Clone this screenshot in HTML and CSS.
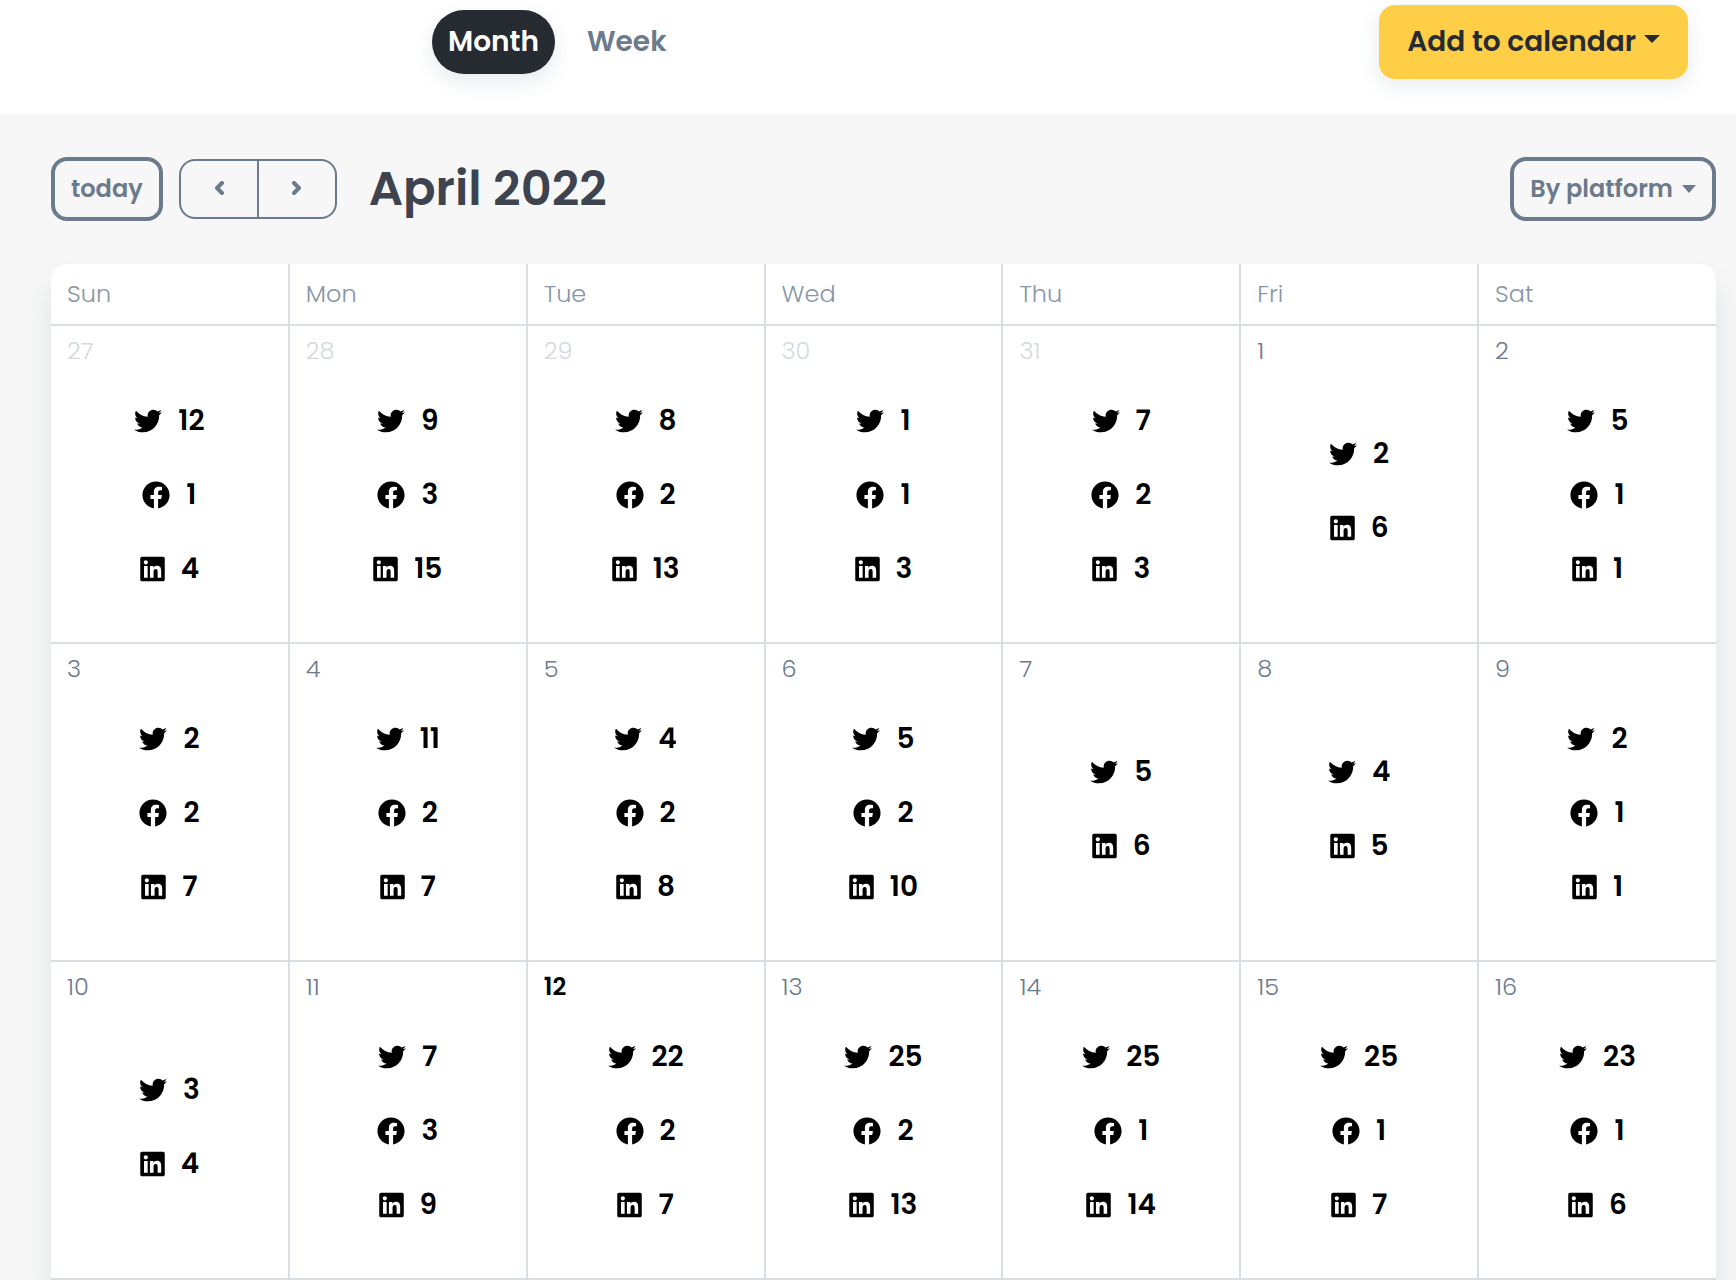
FILE: index.html
```html
<!DOCTYPE html>
<html lang="en">
<head>
    <meta charset="UTF-8">
    <meta name="viewport" content="width=device-width, initial-scale=1.0">
    <title>Calendar</title>
    <link rel="stylesheet" href="styles.css">
</head>
<body>
    <svg class="sprite" aria-hidden="true">
        <symbol id="twitter" viewBox="0 0 512 512">
            <path d="M459.37 151.716c.325 4.548.325 9.097.325 13.645 0 138.72-105.583 298.558-298.558 298.558-59.452 0-114.68-17.219-161.137-47.106 8.447.974 16.568 1.299 25.34 1.299 49.055 0 94.213-16.568 130.274-44.832-46.132-.975-84.792-31.188-98.112-72.772 6.498.974 12.995 1.624 19.818 1.624 9.421 0 18.843-1.3 27.614-3.573-48.081-9.747-84.143-51.98-84.143-102.985v-1.299c13.969 7.797 30.214 12.67 47.431 13.319-28.264-18.843-46.781-51.005-46.781-87.391 0-19.492 5.197-37.36 14.294-52.954 51.655 63.675 129.3 105.258 216.365 109.807-1.624-7.797-2.599-15.918-2.599-24.04 0-57.828 46.782-104.934 104.934-104.934 30.213 0 57.502 12.67 76.67 33.137 23.715-4.548 46.456-13.32 66.599-25.34-7.798 24.366-24.366 44.833-46.132 57.827 21.117-2.273 41.584-8.122 60.426-16.243-14.292 20.791-32.161 39.308-52.628 54.253z"/>
        </symbol>
        <symbol id="facebook" viewBox="0 0 512 512">
            <path d="M504 256C504 119 393 8 256 8S8 119 8 256c0 123.78 90.69 226.38 209.25 245V327.69h-63V256h63v-54.64c0-62.15 37-96.48 93.67-96.48 27.14 0 55.52 4.84 55.52 4.84v61h-31.28c-30.8 0-40.41 19.12-40.41 38.73V256h68.78l-11 71.69h-57.78V501C413.31 482.38 504 379.78 504 256z"/>
        </symbol>
        <symbol id="linkedin" viewBox="0 0 448 512">
            <path d="M416 32H31.9C14.3 32 0 46.5 0 64.3v383.4C0 465.5 14.3 480 31.9 480H416c17.6 0 32-14.5 32-32.3V64.3c0-17.8-14.4-32.3-32-32.3zM135.4 416H69V202.2h66.5V416zm-33.2-243c-21.3 0-38.5-17.3-38.5-38.5S80.9 96 102.2 96c21.2 0 38.5 17.3 38.5 38.5 0 21.3-17.2 38.5-38.5 38.5zm282.1 243h-66.4V312c0-24.8-.5-56.7-34.5-56.7-34.6 0-39.9 27-39.9 54.9V416h-66.4V202.2h63.7v29.2h.9c8.9-16.8 30.6-34.5 62.2-34.5 66.5 0 78.9 43.8 78.9 100.9V416z"/>
        </symbol>
    </svg>

    <header class="topbar">
        <nav class="views">
            <button type="button" class="view active">Month</button>
            <button type="button" class="view">Week</button>
        </nav>
        <button type="button" class="add">Add to calendar<span class="caret"></span></button>
    </header>

    <main>
        <div class="toolbar">
            <button type="button" class="outline">today</button>
            <div class="arrows">
                <button type="button" aria-label="Previous month">
                    <svg width="10" height="16" viewBox="0 0 10 16"><path d="M8 2 3 7l5 5"/></svg>
                </button>
                <button type="button" aria-label="Next month">
                    <svg width="10" height="16" viewBox="0 0 10 16"><path d="m2 2 5 5-5 5"/></svg>
                </button>
            </div>
            <h1>April 2022</h1>
            <button type="button" class="outline platform">By platform<span class="caret"></span></button>
        </div>

        <div class="calendar">
            <table>
                <thead>
                    <tr>
                        <th>Sun</th>
                        <th>Mon</th>
                        <th>Tue</th>
                        <th>Wed</th>
                        <th>Thu</th>
                        <th>Fri</th>
                        <th>Sat</th>
                    </tr>
                </thead>
                <tbody id="days"></tbody>
            </table>
        </div>
    </main>

    <script>
        const networks = ['twitter', 'facebook', 'linkedin'];
        const today = 16;

        // [day, twitter, facebook, linkedin]
        const days = [
            [27, 12, 1, 4], [28, 9, 3, 15], [29, 8, 2, 13], [30, 1, 1, 3], [31, 7, 2, 3], [1, 2, 0, 6], [2, 5, 1, 1],
            [3, 2, 2, 7], [4, 11, 2, 7], [5, 4, 2, 8], [6, 5, 2, 10], [7, 5, 0, 6], [8, 4, 0, 5], [9, 2, 1, 1],
            [10, 3, 0, 4], [11, 7, 3, 9], [12, 22, 2, 7], [13, 25, 2, 13], [14, 25, 1, 14], [15, 25, 1, 7], [16, 23, 1, 6]
        ];

        const tbody = document.getElementById('days');
        let row;

        days.forEach(([day, ...counts], i) => {
            if (i % 7 === 0) {
                row = tbody.insertRow();
            }
            const cell = row.insertCell();
            if (i < 5) cell.className = 'other';
            if (i === today) cell.className = 'today';

            let items = '';
            counts.forEach((n, k) => {
                if (n) {
                    items += `<li><svg class="icon ${networks[k]}"><use href="#${networks[k]}"/></svg><span>${n}</span></li>`;
                }
            });
            cell.innerHTML = `<div class="day">${day}</div><ul>${items}</ul>`;
        });
    </script>
</body>
</html>
```
FILE: styles.css
```css
* {
    box-sizing: border-box;
}

body {
    margin: 0;
    background: #f7f7f7;
    color: #000;
    font-family: Poppins, Inter, sans-serif;
    font-size: 24px;
}

button {
    font: inherit;
    font-weight: 600;
    border: 0;
    background: none;
    cursor: pointer;
}

.sprite {
    display: none;
}

.topbar {
    display: flex;
    justify-content: space-between;
    align-items: center;
    padding: 5px 48px 35px 432px;
    background: #fff;
}

.views {
    display: flex;
    gap: 16px;
}

.view {
    height: 64px;
    padding: 0 16px;
    border-radius: 32px;
    color: #6b7a8c;
    font-size: 28px;
}

.view.active {
    background: #262b31;
    color: #fff;
    box-shadow: 0 8px 20px rgba(93, 113, 133, 0.15);
}

.add {
    height: 74px;
    padding: 0 28px;
    border-radius: 16px;
    background: #ffce47;
    color: #262b31;
    font-size: 28px;
    box-shadow: 0 6px 20px rgba(93, 113, 133, 0.15);
}

.caret {
    display: inline-block;
    margin-left: 8px;
    border: 8px solid transparent;
    border-top-color: currentColor;
    border-bottom: 0;
    vertical-align: 8px;
}

main {
    padding: 43px 20px 0 51px;
}

.toolbar {
    display: flex;
    align-items: center;
    margin-bottom: 43px;
}

.outline {
    height: 64px;
    padding: 0 16px 2px;
    border: 4px solid #6b7a8c;
    border-radius: 16px;
    color: #6b7a8c;
}

.arrows {
    display: flex;
    margin: 0 32px 0 16px;
    border: 2px solid #6b7a8c;
    border-radius: 16px;
}

.arrows button {
    display: flex;
    align-items: center;
    justify-content: center;
    width: 76px;
    height: 56px;
    padding: 0;
}

.arrows button + button {
    width: 78px;
    border-left: 2px solid #6b7a8c;
}

.arrows svg {
    fill: none;
    stroke: #6b7a8c;
    stroke-width: 4;
    stroke-linecap: round;
    stroke-linejoin: round;
}

h1 {
    margin: 0;
    color: #3e444f;
    font-size: 48px;
    font-weight: 600;
    line-height: 60px;
}

.platform {
    margin-left: auto;
}

.platform .caret {
    margin-left: 9px;
    border-width: 8px 7px 0;
    vertical-align: 4px;
}

.calendar {
    border-radius: 16px 16px 0 0;
    background: #fff;
    box-shadow: 0 20px 30px rgba(93, 113, 133, 0.15);
}

table {
    width: 100%;
    table-layout: fixed;
    border-collapse: collapse;
}

th,
td {
    border: 2px solid #dadde2;
    text-align: left;
}

th {
    height: 61px;
    padding: 0 16px 1px;
    border-top: 0;
    color: #8795a4;
    font-weight: 300;
}

td {
    height: 318px;
    padding: 0;
    vertical-align: top;
}

th:first-child,
td:first-child {
    border-left: 0;
}

th:last-child,
td:last-child {
    border-right: 0;
}

.day {
    padding: 8px 16px 0;
    color: #6b7a8c;
    font-weight: 300;
    line-height: 34px;
}

.other .day {
    color: #d5d9de;
}

.today .day {
    color: #000;
    font-weight: 600;
}

ul {
    display: flex;
    flex-direction: column;
    justify-content: center;
    min-height: 214px;
    margin: 16px 0 0;
    padding: 0;
    list-style: none;
}

li {
    display: flex;
    align-items: center;
    justify-content: center;
    gap: 16px;
    height: 74px;
    font-size: 28px;
    font-weight: 600;
}

.icon {
    width: 28px;
    height: 28px;
}

.icon.linkedin {
    width: 25px;
}
```
